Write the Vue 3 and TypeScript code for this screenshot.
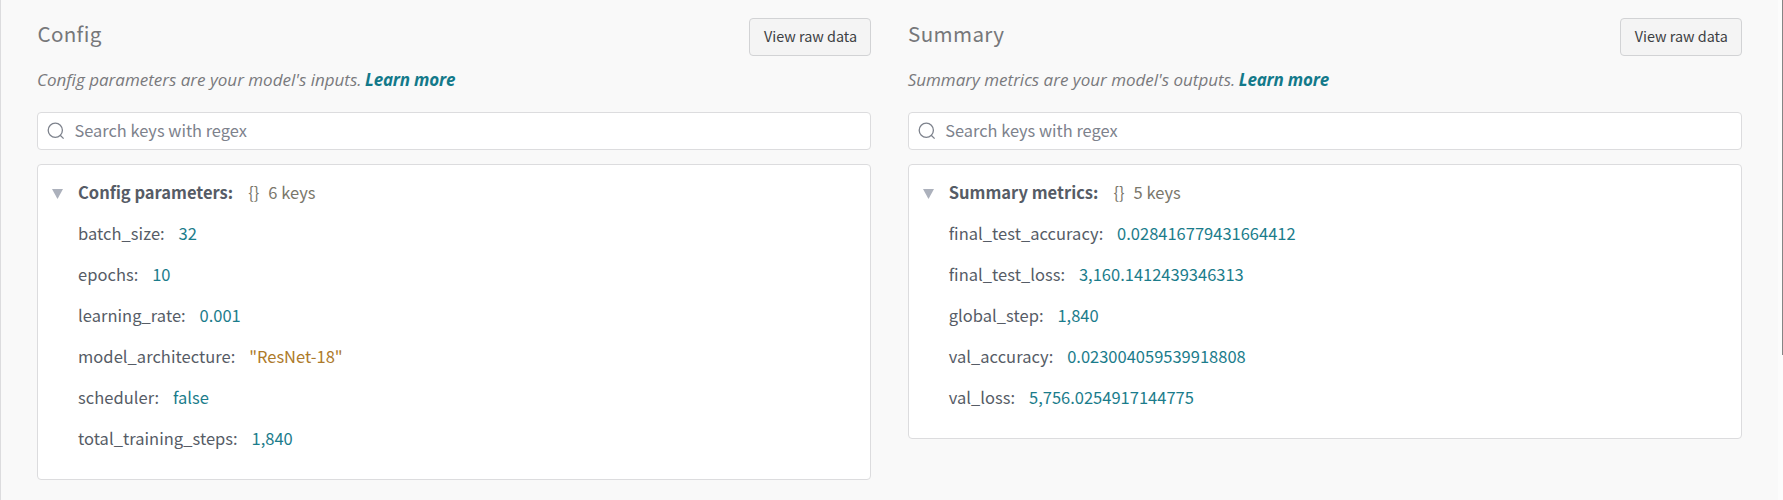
<script setup lang="ts">
import { ref } from 'vue'

interface Entry {
  name: string
  value: string
  text?: boolean
}

interface Panel {
  id: string
  title: string
  intro: string
  heading: string
  entries: Entry[]
}

const panels: Panel[] = [
  {
    id: 'config',
    title: 'Config',
    intro: "Config parameters are your model's inputs.",
    heading: 'Config parameters:',
    entries: [
      { name: 'batch_size', value: '32' },
      { name: 'epochs', value: '10' },
      { name: 'learning_rate', value: '0.001' },
      { name: 'model_architecture', value: '"ResNet-18"', text: true },
      { name: 'scheduler', value: 'false' },
      { name: 'total_training_steps', value: '1,840' },
    ],
  },
  {
    id: 'summary',
    title: 'Summary',
    intro: "Summary metrics are your model's outputs.",
    heading: 'Summary metrics:',
    entries: [
      { name: 'final_test_accuracy', value: '0.028416779431664412' },
      { name: 'final_test_loss', value: '3,160.1412439346313' },
      { name: 'global_step', value: '1,840' },
      { name: 'val_accuracy', value: '0.023004059539918808' },
      { name: 'val_loss', value: '5,756.0254917144775' },
    ],
  },
]

const open = ref<Record<string, boolean>>({ config: true, summary: true })
</script>

<template>
  <div class="page">
    <main class="panels">
      <section v-for="panel in panels" :key="panel.id" class="panel">
        <header class="head">
          <h2 class="title">{{ panel.title }}</h2>
          <button class="raw" type="button">View raw data</button>
        </header>
        <p class="intro">
          <span>{{ panel.intro }}</span>
          <a class="learn">Learn more</a>
        </p>
        <label class="search">
          <svg class="lens" viewBox="0 0 18 18">
            <circle cx="8.3" cy="8.3" r="7.1" />
            <path d="M13.2 13.2 L16.6 16.6" />
          </svg>
          <input type="text" placeholder="Search keys with regex" />
        </label>
        <div class="card">
          <div class="row" @click="open[panel.id] = !open[panel.id]">
            <svg class="arrow" viewBox="0 0 11 10"><path d="M0 0 H11 L5.5 10 Z" /></svg>
            <strong class="heading">{{ panel.heading }}</strong>
            <span class="braces">{}</span>
            <span class="count">{{ panel.entries.length }} keys</span>
          </div>
          <template v-if="open[panel.id]">
            <div v-for="entry in panel.entries" :key="entry.name" class="row entry">
              <span class="name">{{ entry.name }}:</span>
              <span class="value" :class="{ text: entry.text }">{{ entry.value }}</span>
            </div>
          </template>
        </div>
      </section>
    </main>
    <div class="track"><div class="thumb"></div></div>
  </div>
</template>

<style>
body {
  background: #f9f9f9;
  overflow: hidden;
}
</style>

<style scoped>
.page {
  box-sizing: border-box;
  display: flex;
  height: 500px;
  border-left: 1px solid #dcdcde;
  background: #f9f9f9;
  font-family: "Noto Sans CJK SC", "Source Sans Pro", sans-serif;
  font-size: 16.5px;
  color: #565c66;
}
.panels {
  flex: 1;
  display: grid;
  grid-template-columns: 1fr 1fr;
  gap: 36.7px;
  align-items: start;
  padding: 18px 36.3px 0 36px;
}
.panel {
  display: flex;
  flex-direction: column;
}
.head {
  display: flex;
  justify-content: space-between;
  height: 38px;
}
.title {
  margin: 0;
  padding-left: 0.4px;
  font-size: 20.6px;
  font-weight: 400;
  line-height: 31px;
  letter-spacing: 0.35px;
  color: #76777a;
}
.raw {
  box-sizing: border-box;
  width: 122px;
  height: 38px;
  padding: 0 0 2px 1px;
  border: 1px solid #d2d3d5;
  border-radius: 4px;
  background: #f4f4f4;
  font-family: inherit;
  font-size: 14.4px;
  line-height: 34px;
  color: #3c4043;
}
.intro {
  display: flex;
  gap: 3.5px;
  margin: 12px 0 0;
  height: 44px;
  font-family: "Open Sans", sans-serif;
  font-size: 17px;
  font-style: italic;
  line-height: 24px;
  letter-spacing: 0;
  color: #797a7d;
}
.learn {
  font-weight: 700;
  letter-spacing: -0.2px;
  color: #13798a;
}
.search {
  box-sizing: border-box;
  display: flex;
  align-items: center;
  height: 38px;
  padding-left: 9px;
  border: 1px solid #dcdcde;
  border-radius: 4px;
  background: #fff;
}
.lens {
  width: 18px;
  height: 18px;
  fill: none;
  stroke: #7d828c;
  stroke-width: 1.3;
}
.search input {
  flex: 1;
  height: 34px;
  margin: 0 0 0 9.5px;
  padding: 0 0 2px;
  box-sizing: border-box;
  border: 0;
  outline: 0;
  background: none;
  font-family: inherit;
  font-size: 16.4px;
}
.search input::placeholder {
  color: #7d828c;
  opacity: 1;
}
.card {
  margin-top: 14px;
  padding: 7px 14px 20px;
  border: 1px solid #dcdcde;
  border-radius: 4px;
  background: #fff;
}
.row {
  display: flex;
  align-items: center;
  height: 41px;
  line-height: 41px;
  white-space: nowrap;
}
.arrow {
  width: 11px;
  height: 10px;
  margin: 3px 15px 0 0;
  fill: #acb1bc;
}
.heading {
  font-weight: 700;
}
.braces {
  margin-left: 15px;
  color: #7a776b;
}
.count {
  margin-left: 9px;
  color: #7a776b;
}
.entry {
  padding-left: 26px;
}
.name {
  letter-spacing: 0.04px;
}
.value {
  margin-left: 13.8px;
  color: #1b7c8b;
}
.value.text {
  color: #ad7a2a;
}
.track {
  width: 5px;
  background: #fcfcfc;
}
.thumb {
  width: 1px;
  height: 355px;
  margin-left: 4px;
  background: #858585;
}
</style>
